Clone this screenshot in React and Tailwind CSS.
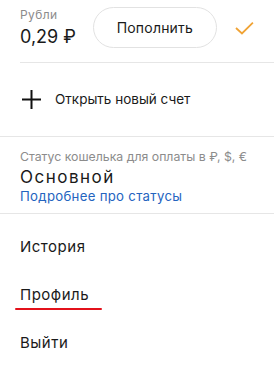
export default function App() {
  const font = { fontFamily: 'Inter, "Noto Sans", sans-serif' };
  return (
    <div className="w-[274px] h-[365px] bg-white overflow-hidden text-[#1a1a1a]" style={font}>
      <div className="pl-5">
        <div className="flex items-center h-[62px] pr-5">
          <div className="flex flex-col w-[73px] -mt-[5px]">
            <span className="text-[12px] leading-[14px] tracking-[0.4px] text-[#8c8c8c]">Рубли</span>
            <span className="text-[18px] leading-[24px] mt-[3px]">0,29 ₽</span>
          </div>
          <button className="w-[125px] h-[41px] -mt-[7px] rounded-full border border-[#e2e2e2] text-[14px] tracking-[0.2px] text-[#1a1a1a] flex items-center justify-center">
            Пополнить
          </button>
          <svg className="ml-[18px] -mt-[6px]" width="19" height="14" viewBox="0 0 19 14">
            <path d="M1 7 L7 12.5 L18 1.5" fill="none" stroke="#f0a335" strokeWidth="1.8" />
          </svg>
        </div>
        <div className="h-px bg-[#e6e6e6]" />
      </div>
      <div className="flex items-center h-[73px] px-5">
        <svg className="ml-[2px]" width="19" height="19" viewBox="0 0 19 19">
          <path d="M9.5 0 V19 M0 9.5 H19" stroke="#111" strokeWidth="2" />
        </svg>
        <span className="ml-[14px] text-[13.5px]">Открыть новый счет</span>
      </div>
      <div className="h-px bg-[#e6e6e6]" />
      <div className="px-5 pt-[12px] h-[76px]">
        <div className="text-[12.3px] leading-[15px] text-[#8c8c8c]">Статус кошелька для оплаты в ₽, $, €</div>
        <div className="text-[17px] leading-[22px] tracking-[1.5px] mt-[2px]">Основной</div>
        <div className="text-[13.2px] leading-[17px] tracking-[0.3px] text-[#2464bf]">Подробнее про статусы</div>
      </div>
      <div className="h-px bg-[#e6e6e6]" />
      <div className="pt-[9px] px-5 flex flex-col">
        <div className="h-[48px] flex items-center text-[15px] tracking-[0.5px]">История</div>
        <div className="h-[48px] flex items-center text-[15px] tracking-[0.5px]">
          <span className="relative">
            Профиль
            <span className="absolute left-[-5px] right-[-13px] top-[24px] h-[2.5px] rounded-full bg-[#e3111b]" />
          </span>
        </div>
        <div className="h-[48px] flex items-center text-[15px] tracking-[0.5px]">Выйти</div>
      </div>
    </div>
  );
}
